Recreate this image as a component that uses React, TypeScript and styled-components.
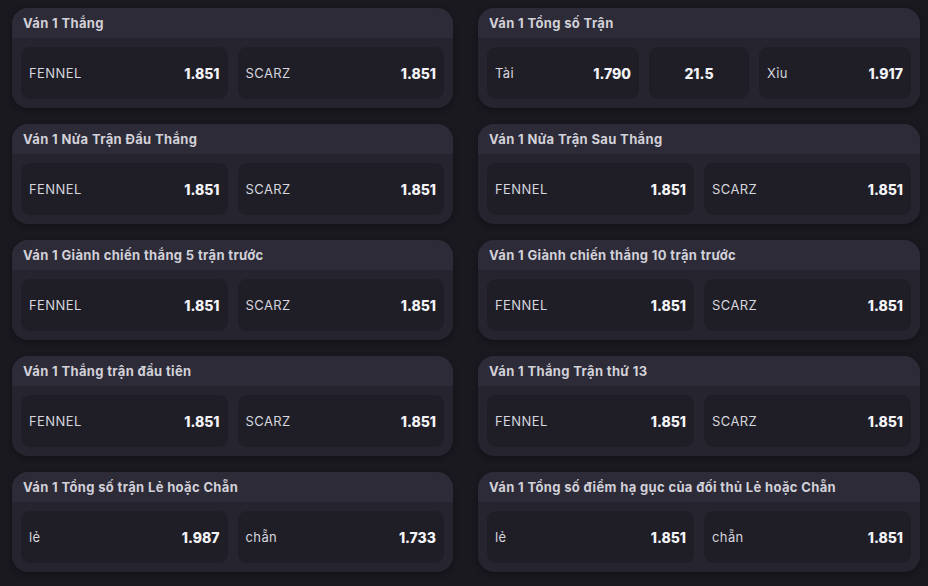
import React from "react";
import styled, { createGlobalStyle } from "styled-components";

const Global = createGlobalStyle`
  html, body { margin: 0; padding: 0; background: #1a1920; }
  body { font-family: Inter, "Noto Sans", sans-serif; }
  * { box-sizing: border-box; }
`;

const Viewport = styled.div`
  height: 586px;
  overflow: hidden;
  padding: 10px 8px 0 12px;
`;

const Grid = styled.div`
  margin-top: -2px;
  display: grid;
  grid-template-columns: 441px 442px;
  column-gap: 25px;
  row-gap: 16px;
`;

const Card = styled.div`
  height: 100px;
  border-radius: 16px;
  overflow: hidden;
  background: #26252f;
  box-shadow: 0 2px 6px rgba(0, 0, 0, 0.35);
  display: flex;
  flex-direction: column;
`;

const Header = styled.div`
  height: 30px;
  flex: none;
  background: #2d2b38;
  display: flex;
  align-items: center;
  padding: 0 11px;
  font-size: 13px;
  font-weight: 700;
  letter-spacing: 0.35px;
  color: #d2d1d8;
  white-space: nowrap;
`;

const Body = styled.div<{ $three?: boolean }>`
  flex: 1;
  padding: 9px;
  display: grid;
  grid-template-columns: ${(p) => (p.$three ? "1fr 100px 1fr" : "1fr 1fr")};
  gap: 10px;
`;

const Box = styled.div<{ $center?: boolean }>`
  background: #1f1e26;
  border-radius: 9px;
  display: flex;
  align-items: center;
  justify-content: ${(p) => (p.$center ? "center" : "space-between")};
  padding: 0 8px;
`;

const Label = styled.span`
  font-size: 13px;
  font-weight: 400;
  color: #d6d6de;
  letter-spacing: 0.4px;
`;

const Value = styled.span`
  font-size: 14px;
  font-weight: 800;
  color: #f4f4f8;
`;

type Opt = { label?: string; value: string };
type Market = { title: string; options: Opt[] };

const f = (): Opt[] => [
  { label: "FENNEL", value: "1.851" },
  { label: "SCARZ", value: "1.851" },
];

const markets: Market[] = [
  { title: "Ván 1 Thắng", options: f() },
  {
    title: "Ván 1 Tổng số Trận",
    options: [
      { label: "Tài", value: "1.790" },
      { value: "21.5" },
      { label: "Xỉu", value: "1.917" },
    ],
  },
  { title: "Ván 1 Nửa Trận Đầu Thắng", options: f() },
  { title: "Ván 1 Nửa Trận Sau Thắng", options: f() },
  { title: "Ván 1 Giành chiến thắng 5 trận trước", options: f() },
  { title: "Ván 1 Giành chiến thắng 10 trận trước", options: f() },
  { title: "Ván 1 Thắng trận đầu tiên", options: f() },
  { title: "Ván 1 Thắng Trận thứ 13", options: f() },
  {
    title: "Ván 1 Tổng số trận Lẻ hoặc Chẵn",
    options: [
      { label: "lẻ", value: "1.987" },
      { label: "chẵn", value: "1.733" },
    ],
  },
  {
    title: "Ván 1 Tổng số điểm hạ gục của đối thủ Lẻ hoặc Chẵn",
    options: [
      { label: "lẻ", value: "1.851" },
      { label: "chẵn", value: "1.851" },
    ],
  },
];

export default function App() {
  return (
    <>
      <Global />
      <Viewport>
        <Grid>
          {markets.map((m) => (
            <Card key={m.title}>
              <Header>{m.title}</Header>
              <Body $three={m.options.length === 3}>
                {m.options.map((o, i) => (
                  <Box key={i} $center={!o.label}>
                    {o.label && <Label>{o.label}</Label>}
                    <Value>{o.value}</Value>
                  </Box>
                ))}
              </Body>
            </Card>
          ))}
        </Grid>
      </Viewport>
    </>
  );
}
